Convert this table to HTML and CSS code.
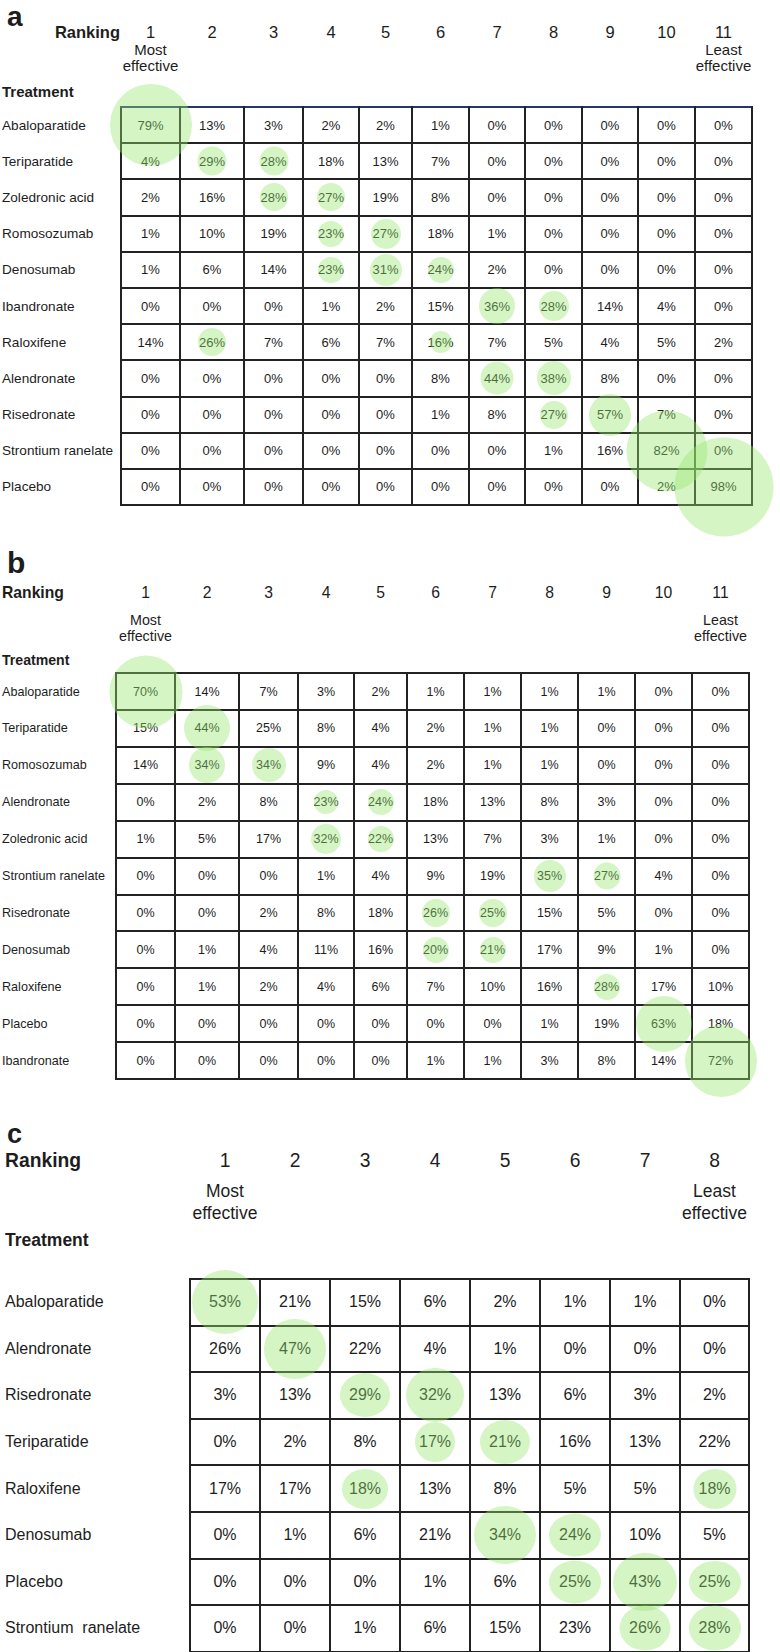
FILE: index.html
```html
<!DOCTYPE html>
<html lang="en">
<head>
<meta charset="utf-8">
<title>Treatment rankings</title>
<link rel="stylesheet" href="styles.css">
</head>
<body>
<section class="panel pa">
<table class="grid ga">
<colgroup><col><col><col><col><col><col><col><col><col><col><col><col></colgroup>
<tr class="h1"><td class="hl"><div class="hflex"><span class="letter">a</span><span class="rank">Ranking</span></div></td><td class="n">1</td><td class="n">2</td><td class="n">3</td><td class="n">4</td><td class="n">5</td><td class="n">6</td><td class="n">7</td><td class="n">8</td><td class="n">9</td><td class="n">10</td><td class="n">11</td></tr>
<tr class="h2"><td></td><td class="sub">Most<br>effective</td><td></td><td></td><td></td><td></td><td></td><td></td><td></td><td></td><td></td><td class="sub">Least<br>effective</td></tr>
<tr class="h3"><td class="treat">Treatment</td><td colspan="11"></td></tr>
<tr class="r first"><td class="lbl">Abaloparatide</td><td>79%<span class="dot" style="width:82px;height:82px"></span></td><td>13%</td><td>3%</td><td>2%</td><td>2%</td><td>1%</td><td>0%</td><td>0%</td><td>0%</td><td>0%</td><td>0%</td></tr>
<tr class="r"><td class="lbl">Teriparatide</td><td>4%</td><td>29%<span class="dot" style="width:29px;height:29px"></span></td><td>28%<span class="dot" style="width:29px;height:29px"></span></td><td>18%</td><td>13%</td><td>7%</td><td>0%</td><td>0%</td><td>0%</td><td>0%</td><td>0%</td></tr>
<tr class="r"><td class="lbl">Zoledronic acid</td><td>2%</td><td>16%</td><td>28%<span class="dot" style="width:28px;height:28px"></span></td><td>27%<span class="dot" style="width:28px;height:28px"></span></td><td>19%</td><td>8%</td><td>0%</td><td>0%</td><td>0%</td><td>0%</td><td>0%</td></tr>
<tr class="r"><td class="lbl">Romosozumab</td><td>1%</td><td>10%</td><td>19%</td><td>23%<span class="dot" style="width:26px;height:26px"></span></td><td>27%<span class="dot" style="width:30px;height:30px"></span></td><td>18%</td><td>1%</td><td>0%</td><td>0%</td><td>0%</td><td>0%</td></tr>
<tr class="r"><td class="lbl">Denosumab</td><td>1%</td><td>6%</td><td>14%</td><td>23%<span class="dot" style="width:26px;height:26px"></span></td><td>31%<span class="dot" style="width:32px;height:32px"></span></td><td>24%<span class="dot" style="width:26px;height:26px"></span></td><td>2%</td><td>0%</td><td>0%</td><td>0%</td><td>0%</td></tr>
<tr class="r"><td class="lbl">Ibandronate</td><td>0%</td><td>0%</td><td>0%</td><td>1%</td><td>2%</td><td>15%</td><td>36%<span class="dot" style="width:36px;height:36px"></span></td><td>28%<span class="dot" style="width:30px;height:30px"></span></td><td>14%</td><td>4%</td><td>0%</td></tr>
<tr class="r"><td class="lbl">Raloxifene</td><td>14%</td><td>26%<span class="dot" style="width:28px;height:28px"></span></td><td>7%</td><td>6%</td><td>7%</td><td>16%<span class="dot" style="width:22px;height:22px"></span></td><td>7%</td><td>5%</td><td>4%</td><td>5%</td><td>2%</td></tr>
<tr class="r"><td class="lbl">Alendronate</td><td>0%</td><td>0%</td><td>0%</td><td>0%</td><td>0%</td><td>8%</td><td>44%<span class="dot" style="width:33px;height:33px"></span></td><td>38%<span class="dot" style="width:34px;height:34px"></span></td><td>8%</td><td>0%</td><td>0%</td></tr>
<tr class="r"><td class="lbl">Risedronate</td><td>0%</td><td>0%</td><td>0%</td><td>0%</td><td>0%</td><td>1%</td><td>8%</td><td>27%<span class="dot" style="width:28px;height:28px"></span></td><td>57%<span class="dot" style="width:42px;height:42px"></span></td><td>7%</td><td>0%</td></tr>
<tr class="r"><td class="lbl">Strontium ranelate</td><td>0%</td><td>0%</td><td>0%</td><td>0%</td><td>0%</td><td>0%</td><td>0%</td><td>1%</td><td>16%</td><td>82%<span class="dot" style="width:81px;height:81px"></span></td><td>0%</td></tr>
<tr class="r"><td class="lbl">Placebo</td><td>0%</td><td>0%</td><td>0%</td><td>0%</td><td>0%</td><td>0%</td><td>0%</td><td>0%</td><td>0%</td><td>2%</td><td>98%<span class="dot" style="width:99px;height:99px"></span></td></tr>
</table>
</section>

<section class="panel pb">
<div class="letter lb">b</div>
<table class="grid gb">
<colgroup><col><col><col><col><col><col><col><col><col><col><col><col></colgroup>
<tr class="h1"><td class="rank">Ranking</td><td class="n">1</td><td class="n">2</td><td class="n">3</td><td class="n">4</td><td class="n">5</td><td class="n">6</td><td class="n">7</td><td class="n">8</td><td class="n">9</td><td class="n">10</td><td class="n">11</td></tr>
<tr class="h2"><td></td><td class="sub">Most<br>effective</td><td></td><td></td><td></td><td></td><td></td><td></td><td></td><td></td><td></td><td class="sub">Least<br>effective</td></tr>
<tr class="h3"><td class="treat">Treatment</td><td colspan="11"></td></tr>
<tr class="r first"><td class="lbl">Abaloparatide</td><td>70%<span class="dot" style="width:73px;height:73px"></span></td><td>14%</td><td>7%</td><td>3%</td><td>2%</td><td>1%</td><td>1%</td><td>1%</td><td>1%</td><td>0%</td><td>0%</td></tr>
<tr class="r"><td class="lbl">Teriparatide</td><td>15%</td><td>44%<span class="dot" style="width:46px;height:46px"></span></td><td>25%</td><td>8%</td><td>4%</td><td>2%</td><td>1%</td><td>1%</td><td>0%</td><td>0%</td><td>0%</td></tr>
<tr class="r"><td class="lbl">Romosozumab</td><td>14%</td><td>34%<span class="dot" style="width:36px;height:36px"></span></td><td>34%<span class="dot" style="width:34px;height:34px"></span></td><td>9%</td><td>4%</td><td>2%</td><td>1%</td><td>1%</td><td>0%</td><td>0%</td><td>0%</td></tr>
<tr class="r"><td class="lbl">Alendronate</td><td>0%</td><td>2%</td><td>8%</td><td>23%<span class="dot" style="width:24px;height:24px"></span></td><td>24%<span class="dot" style="width:26px;height:26px"></span></td><td>18%</td><td>13%</td><td>8%</td><td>3%</td><td>0%</td><td>0%</td></tr>
<tr class="r"><td class="lbl">Zoledronic acid</td><td>1%</td><td>5%</td><td>17%</td><td>32%<span class="dot" style="width:30px;height:30px"></span></td><td>22%<span class="dot" style="width:26px;height:26px"></span></td><td>13%</td><td>7%</td><td>3%</td><td>1%</td><td>0%</td><td>0%</td></tr>
<tr class="r"><td class="lbl">Strontium ranelate</td><td>0%</td><td>0%</td><td>0%</td><td>1%</td><td>4%</td><td>9%</td><td>19%</td><td>35%<span class="dot" style="width:32px;height:32px"></span></td><td>27%<span class="dot" style="width:27px;height:27px"></span></td><td>4%</td><td>0%</td></tr>
<tr class="r"><td class="lbl">Risedronate</td><td>0%</td><td>0%</td><td>2%</td><td>8%</td><td>18%</td><td>26%<span class="dot" style="width:28px;height:28px"></span></td><td>25%<span class="dot" style="width:28px;height:28px"></span></td><td>15%</td><td>5%</td><td>0%</td><td>0%</td></tr>
<tr class="r"><td class="lbl">Denosumab</td><td>0%</td><td>1%</td><td>4%</td><td>11%</td><td>16%</td><td>20%<span class="dot" style="width:26px;height:26px"></span></td><td>21%<span class="dot" style="width:26px;height:26px"></span></td><td>17%</td><td>9%</td><td>1%</td><td>0%</td></tr>
<tr class="r"><td class="lbl">Raloxifene</td><td>0%</td><td>1%</td><td>2%</td><td>4%</td><td>6%</td><td>7%</td><td>10%</td><td>16%</td><td>28%<span class="dot" style="width:26px;height:26px"></span></td><td>17%</td><td>10%</td></tr>
<tr class="r"><td class="lbl">Placebo</td><td>0%</td><td>0%</td><td>0%</td><td>0%</td><td>0%</td><td>0%</td><td>0%</td><td>1%</td><td>19%</td><td>63%<span class="dot" style="width:56px;height:56px"></span></td><td>18%</td></tr>
<tr class="r"><td class="lbl">Ibandronate</td><td>0%</td><td>0%</td><td>0%</td><td>0%</td><td>0%</td><td>1%</td><td>1%</td><td>3%</td><td>8%</td><td>14%</td><td>72%<span class="dot" style="width:72px;height:72px"></span></td></tr>
</table>
</section>

<section class="panel pc">
<div class="letter lc">c</div>
<table class="grid gc">
<colgroup><col><col><col><col><col><col><col><col><col></colgroup>
<tr class="h1"><td class="rank">Ranking</td><td class="n">1</td><td class="n">2</td><td class="n">3</td><td class="n">4</td><td class="n">5</td><td class="n">6</td><td class="n">7</td><td class="n">8</td></tr>
<tr class="h2"><td></td><td class="sub">Most<br>effective</td><td></td><td></td><td></td><td></td><td></td><td></td><td class="sub">Least<br>effective</td></tr>
<tr class="h3"><td class="treat">Treatment</td><td colspan="8"></td></tr>
<tr class="r first"><td class="lbl">Abaloparatide</td><td>53%<span class="dot" style="width:66px;height:64px"></span></td><td>21%</td><td>15%</td><td>6%</td><td>2%</td><td>1%</td><td>1%</td><td>0%</td></tr>
<tr class="r"><td class="lbl">Alendronate</td><td>26%</td><td>47%<span class="dot" style="width:62px;height:60px"></span></td><td>22%</td><td>4%</td><td>1%</td><td>0%</td><td>0%</td><td>0%</td></tr>
<tr class="r"><td class="lbl">Risedronate</td><td>3%</td><td>13%</td><td>29%<span class="dot" style="width:50px;height:44px"></span></td><td>32%<span class="dot" style="width:58px;height:54px"></span></td><td>13%</td><td>6%</td><td>3%</td><td>2%</td></tr>
<tr class="r"><td class="lbl">Teriparatide</td><td>0%</td><td>2%</td><td>8%</td><td>17%<span class="dot" style="width:40px;height:40px"></span></td><td>21%<span class="dot" style="width:50px;height:44px"></span></td><td>16%</td><td>13%</td><td>22%</td></tr>
<tr class="r"><td class="lbl">Raloxifene</td><td>17%</td><td>17%</td><td>18%<span class="dot" style="width:46px;height:40px"></span></td><td>13%</td><td>8%</td><td>5%</td><td>5%</td><td>18%<span class="dot" style="width:43px;height:40px"></span></td></tr>
<tr class="r"><td class="lbl">Denosumab</td><td>0%</td><td>1%</td><td>6%</td><td>21%</td><td>34%<span class="dot" style="width:62px;height:58px"></span></td><td>24%<span class="dot" style="width:52px;height:43px"></span></td><td>10%</td><td>5%</td></tr>
<tr class="r"><td class="lbl">Placebo</td><td>0%</td><td>0%</td><td>0%</td><td>1%</td><td>6%</td><td>25%<span class="dot" style="width:52px;height:43px"></span></td><td>43%<span class="dot" style="width:64px;height:58px"></span></td><td>25%<span class="dot" style="width:52px;height:42px"></span></td></tr>
<tr class="r"><td class="lbl">Strontium&nbsp; ranelate</td><td>0%</td><td>0%</td><td>1%</td><td>6%</td><td>15%</td><td>23%</td><td>26%<span class="dot" style="width:51px;height:45px"></span></td><td>28%<span class="dot" style="width:52px;height:45px"></span></td></tr>
</table>
</section>
</body>
</html>
```

FILE: styles.css
```css
* { box-sizing: border-box; }
html, body { margin: 0; padding: 0; background: #fff; }
body {
  font-family: "Liberation Sans", Arial, sans-serif;
  color: #1d1d1d;
  width: 780px;
  height: 1652px;
  overflow: hidden;
}

.grid {
  border-collapse: collapse;
  table-layout: fixed;
}
.grid td {
  padding: 0;
  vertical-align: top;
  white-space: nowrap;
}

/* data cells */
.grid tr.r td {
  vertical-align: middle;
}
.grid tr.r td:not(.lbl) {
  border: 2px solid #222;
  text-align: center;
  position: relative;
}
.grid .lbl { text-align: left; }

.dot {
  position: absolute;
  left: 50%;
  top: 50%;
  transform: translate(-50%, -50%);
  border-radius: 50%;
  background: rgba(150, 230, 110, 0.4);
  z-index: 2;
  pointer-events: none;
}

.letter { font-weight: bold; }
.rank { font-weight: bold; }
.treat { font-weight: bold; }
.n { text-align: center; }
.grid td.sub { text-align: center; }

/* ---------- panel a ---------- */
.ga { width: 752px; }
.ga col:nth-child(1) { width: 121px; }
.ga col:nth-child(2) { width: 59px; }
.ga col:nth-child(3) { width: 64px; }
.ga col:nth-child(4) { width: 59px; }
.ga col:nth-child(5) { width: 56px; }
.ga col:nth-child(6) { width: 53px; }
.ga col:nth-child(7) { width: 57px; }
.ga col:nth-child(8) { width: 56px; }
.ga col:nth-child(9) { width: 57px; }
.ga col:nth-child(10) { width: 56px; }
.ga col:nth-child(11) { width: 57px; }
.ga col:nth-child(12) { width: 57px; }

.ga .h1 td { height: 42px; }
.ga .hflex {
  display: flex;
  justify-content: space-between;
  align-items: flex-start;
  padding-left: 7px;
  padding-right: 1px;
}
.ga .letter { font-size: 28px; line-height: 28px; margin-top: 3px; }
.ga .rank { font-size: 16.5px; line-height: 20px; margin-top: 22px; }
.ga .n { font-size: 16.5px; line-height: 20px; padding-top: 22px; }
.ga .h2 td { height: 32px; }
.ga .sub { font-size: 15px; line-height: 16px; }
.ga .h3 td { height: 33px; }
.ga .treat { font-size: 15px; line-height: 18px; padding-top: 9px; padding-left: 2px; }
.ga tr.r td { height: 36.2px; font-size: 13px; }
.ga tr.r .lbl { font-size: 13.6px; padding-left: 2px; }
.ga tr.first td:not(.lbl) { border-top-color: #26366f; }

/* ---------- panel b ---------- */
.pb { margin-top: 42px; }
.lb { font-size: 30px; line-height: 30px; padding-left: 7px; }
.gb { width: 749px; }
.gb col:nth-child(1) { width: 116px; }
.gb col:nth-child(2) { width: 59px; }
.gb col:nth-child(3) { width: 64px; }
.gb col:nth-child(4) { width: 59px; }
.gb col:nth-child(5) { width: 56px; }
.gb col:nth-child(6) { width: 53px; }
.gb col:nth-child(7) { width: 57px; }
.gb col:nth-child(8) { width: 57px; }
.gb col:nth-child(9) { width: 57px; }
.gb col:nth-child(10) { width: 57px; }
.gb col:nth-child(11) { width: 57px; }
.gb col:nth-child(12) { width: 57px; }

.gb .h1 td { height: 25px; padding-top: 5px; font-size: 15.7px; line-height: 20px; }
.gb .rank { padding-left: 2px; }
.gb .h2 td { height: 42px; }
.gb .sub { font-size: 14.3px; line-height: 16.7px; padding-top: 8.7px; }
.gb .h3 td { height: 28px; }
.gb .treat { font-size: 14.1px; line-height: 18px; padding-top: 6px; padding-left: 2px; }
.gb tr.r td { height: 36.9px; font-size: 12.5px; }
.gb tr.r .lbl { font-size: 12.6px; padding-left: 2px; }

/* ---------- panel c ---------- */
.pc { margin-top: 41px; }
.lc { font-size: 27px; line-height: 27px; padding-left: 7px; }
.gc { width: 749px; }
.gc col:nth-child(1) { width: 190px; }
.gc col:nth-child(n+2) { width: 70px; }
.gc col:nth-child(9) { width: 69px; }

.gc .h1 td { height: 25px; padding-top: 1px; font-size: 19.3px; line-height: 24px; }
.gc .rank { padding-left: 5px; }
.gc .h2 td { height: 51px; }
.gc .sub { font-size: 17.5px; line-height: 22px; padding-top: 7px; }
.gc .h3 td { height: 55px; }
.gc .treat { font-size: 17.5px; line-height: 22px; padding-top: 5px; padding-left: 5px; }
.gc tr.r td { height: 46.6px; font-size: 16px; }
.gc tr.r .lbl { font-size: 16px; padding-left: 5px; }
```
